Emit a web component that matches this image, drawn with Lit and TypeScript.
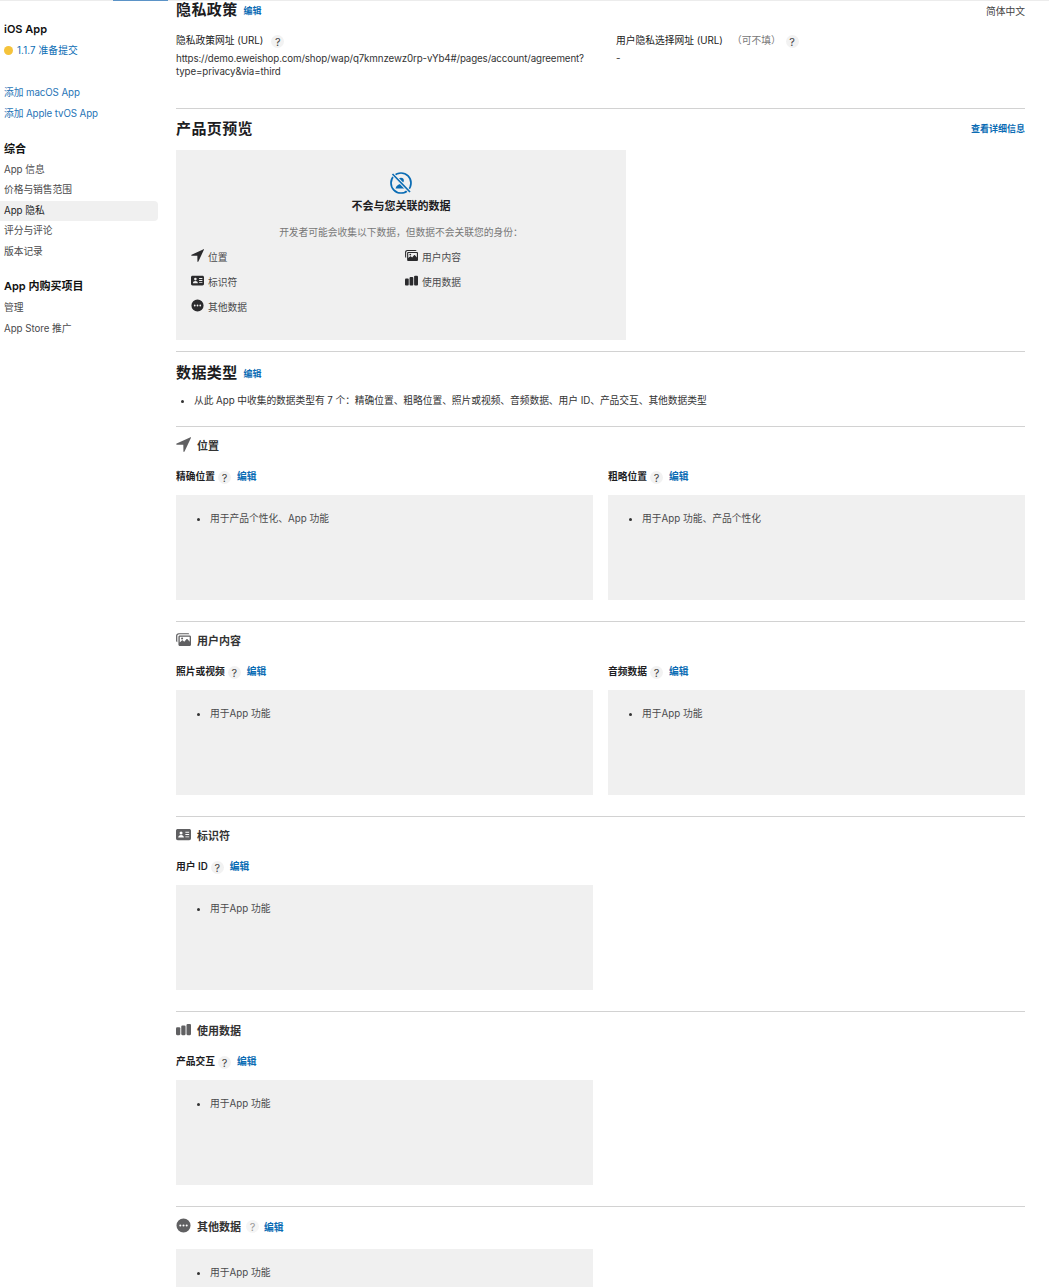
import { LitElement, html, css, svg } from "lit";
import { customElement } from "lit/decorators.js";

const icons: Record<string, any> = {
  loc: svg`<path d="M15.500.2.700 7c-.8.4-.6 1.200.3 1.200l6.800.1.1 6.800c0 .9.800 1.100 1.200.3L16 .7c.2-.4-.1-.7-.5-.5z"/>`,
  photo: svg`<path d="M3 1.200h9.600c.9 0 1.500.5 1.700 1.300H3.400c-1.200 0-2 .8-2 2v6.300c-.8-.2-1.300-.8-1.300-1.700V3.700C.1 2.200 1.300 1.200 3 1.200z"/><path fill-rule="evenodd" d="M4.200 3.600h10.200c1 0 1.600.6 1.600 1.600v8c0 1-.6 1.600-1.600 1.600H4.200c-1 0-1.600-.6-1.600-1.600v-8c0-1 .6-1.600 1.600-1.600zm.1 1.400c-.2 0-.3.100-.3.300v5.900l2.200-2.100c.4-.3.8-.3 1.100 0l1.500 1.300 2.300-2.700c.4-.4.900-.4 1.200 0l2.300 2.700V5.300c0-.2-.1-.3-.3-.3z"/><circle cx="6.500" cy="6.900" r="1.100"/>`,
  id: svg`<path fill-rule="evenodd" d="M2 2h12c1.300 0 2 .7 2 2v8c0 1.300-.7 2-2 2H2c-1.300 0-2-.7-2-2V4c0-1.300.7-2 2-2zm3.400 2.700a1.600 1.600 0 1 0 0 3.200 1.600 1.600 0 0 0 0-3.200zM2.400 11.300h6c0-1.600-1.300-2.700-3-2.700s-3 1.100-3 2.700zM10 5v1h4V5zm0 2.500v1h4v-1zm0 2.500v1h4v-1z"/>`,
  bars: svg`<rect x="0" y="5.500" width="4.600" height="8.500" rx="1.200"/><rect x="5.600" y="3.800" width="4.600" height="10.200" rx="1.200"/><rect x="11.200" y="2" width="4.800" height="12" rx="1.200"/>`,
  more: svg`<path fill-rule="evenodd" d="M8 .5a7.500 7.500 0 1 1 0 15 7.500 7.500 0 0 1 0-15zM4.600 6.900a1.100 1.100 0 1 0 0 2.200 1.100 1.100 0 0 0 0-2.200zm3.400 0a1.100 1.100 0 1 0 0 2.200 1.100 1.100 0 0 0 0-2.200zm3.400 0a1.100 1.100 0 1 0 0 2.200 1.100 1.100 0 0 0 0-2.200z"/>`,
};

const icon = (n: string) => html`<svg class="ico" viewBox="0 0 16 16" fill="currentColor">${icons[n]}</svg>`;

const help = (dim = false) => html`<span class="help ${dim ? "dim" : ""}">?</span>`;

type Card = { name: string; text: string };
type Sec = { ico: string; title: string; cards: Card[] };

const secs: Sec[] = [
  { ico: "loc", title: "位置", cards: [{ name: "精确位置", text: "用于产品个性化、App 功能" }, { name: "粗略位置", text: "用于App 功能、产品个性化" }] },
  { ico: "photo", title: "用户内容", cards: [{ name: "照片或视频", text: "用于App 功能" }, { name: "音频数据", text: "用于App 功能" }] },
  { ico: "id", title: "标识符", cards: [{ name: "用户 ID", text: "用于App 功能" }] },
  { ico: "bars", title: "使用数据", cards: [{ name: "产品交互", text: "用于App 功能" }] },
];

@customElement("app-root")
export class AppRoot extends LitElement {
  static styles = css`
    :host { display: block; height: 1287px; overflow: hidden; background: #fff; color: #1d1d1f;
      font-family: "Inter", "Noto Sans CJK SC", sans-serif; font-size: 9.750px; -webkit-font-smoothing: antialiased; }
    .topbar { height: 1px; background: #ececec; display: flex; }
    .topbar i { display: block; width: 55px; margin-left: 113px; background: #5b93c7; }
    .page { display: flex; align-items: flex-start; }
    aside { width: 176px; flex: none; padding-top: 20px; box-sizing: border-box; }
    aside a, aside div { display: block; }
    .side-h { font-size: 11px; font-weight: 600; line-height: 16px; padding-left: 4px; color: #111; }
    .h1 { margin-top: 16.500px; margin-bottom: 3px; }
    .h2 { margin-top: 16px; margin-bottom: 4px; }
    .ver { display: flex; align-items: center; gap: 4px; padding-left: 4px; margin-top: 5px; margin-bottom: 25px; height: 16px; color: #0a6cb4; letter-spacing: .1px; }
    .dot { width: 9px; height: 9px; border-radius: 50%; background: #f5c33b; flex: none; }
    .add { color: #1f74b6; padding-left: 4px; height: 20.500px; line-height: 20.500px; letter-spacing: -.1px; }
    .nav { width: 158px; height: 20.500px; line-height: 20.500px; padding-left: 4px; box-sizing: border-box; color: #4a4a4c; letter-spacing: -.05px; }
    .nav.on { background: #f0f0f0; border-radius: 0 4px 4px 0; color: #1d1d1f; }
    main { width: 849px; flex: none; margin-top: -1px; }
    .row { display: flex; align-items: center; }
    h2 { margin: 0; font-size: 15px; font-weight: 600; color: #1d1d1f; line-height: 20px; letter-spacing: .4px; }
    .edit { color: #0a6cb4; font-size: 9px; font-weight: 600; }
    .head { height: 20px; }
    .head .edit { margin-left: 6px; }
    .lang { margin-left: auto; color: #444; position: relative; top: 1px; }
    .fields { display: grid; grid-template-columns: 440px 1fr; margin-top: 11px; height: 77px; }
    .lbl { display: flex; align-items: center; height: 18px; color: #222; }
    .lbl .opt { color: #777; margin-left: 9px; }
    .help { width: 13px; height: 13px; border-radius: 50%; background: #f2f2f2; color: #444; font-size: 11px;
      line-height: 14px; text-align: center; margin-left: 8px; position: relative; top: 1px; flex: none; }
    .opt + .help { margin-left: 5px; }
    .help.dim { color: #999; margin-left: -1px; background: #f5f5f5; font-weight: 400; }
    .url { line-height: 13px; margin-top: 3px; color: #333; white-space: nowrap; letter-spacing: -.125px; }
    hr { border: 0; height: 1px; background: #d2d2d2; margin: 0; }
    .more { margin-left: auto; }
    .prev-h { height: 41px; padding-bottom: 2px; box-sizing: border-box; }
    .preview { width: 450px; height: 190px; background: #f0f0f0; box-sizing: border-box; padding-top: 21px; margin-bottom: 11px; }
    .preview .t { text-align: center; font-size: 11px; font-weight: 600; line-height: 14px; margin-top: 4px; color: #1d1d1f; }
    .preview .big { display: block; margin: 0 auto; width: 24px; height: 24px; }
    .preview .s { text-align: center; color: #777; margin-top: 13px; line-height: 14px; }
    .plist { display: grid; grid-template-columns: 214px 1fr; grid-auto-rows: 25px; padding-left: 15px; margin-top: 4px; color: #4a4a4c; }
    .pi { display: flex; align-items: center; gap: 4px; }
    .pi .ico { width: 13px; height: 13px; color: #2b2b2d; position: relative; top: -1px; }
    .types-h { height: 41px; }
    .types-h .edit { margin-left: 6px; position: relative; top: 1px; }
    .types { padding: 1px 0 0 18px; height: 33px; color: #333; line-height: 14px; box-sizing: border-box; letter-spacing: -.05px; }
    .bul { position: relative; }
    .bul::before { content: ""; position: absolute; left: -13px; top: 5px; width: 3px; height: 3px; border-radius: 50%; background: #333; }
    .sec { height: 194px; }
    .sec-h { height: 36px; padding-bottom: 1px; box-sizing: border-box; font-size: 11px; font-weight: 600; gap: 6px; color: #333; }
    .sec-h .ico { width: 15px; height: 15px; color: #606062; }
    .cards { display: grid; grid-template-columns: 417px 417px; column-gap: 15px; }
    .card-h { height: 32px; display: flex; align-items: center; font-size: 9.750px; font-weight: 600; color: #1d1d1f; padding-bottom: 6px; box-sizing: border-box; }
    .card-h .help { font-weight: 400; margin-left: 3px; }
    .card-h .edit { margin-left: 6px; font-size: 9.750px; }
    .box { height: 105px; background: #f0f0f0; box-sizing: border-box; padding: 17px 0 0 34px; line-height: 14px; color: #4a4a4c; }
    .last-h { height: 38px; }
    .last-h .edit { font-size: 9.750px; position: relative; top: 1px; margin-left: -1px; }
    .last .box { width: 417px; margin-top: 4px; }
  `;

  render() {
    return html`
      <div class="topbar"><i></i></div>
      <div class="page">
        <aside>
          <div class="side-h">iOS App</div>
          <div class="ver"><span class="dot"></span><span>1.1.7 准备提交</span></div>
          <a class="add">添加 macOS App</a>
          <a class="add">添加 Apple tvOS App</a>
          <div class="side-h h1">综合</div>
          <div class="nav">App 信息</div>
          <div class="nav">价格与销售范围</div>
          <div class="nav on">App 隐私</div>
          <div class="nav">评分与评论</div>
          <div class="nav">版本记录</div>
          <div class="side-h h2">App 内购买项目</div>
          <div class="nav">管理</div>
          <div class="nav">App Store 推广</div>
        </aside>
        <main>
          <div class="row head"><h2>隐私政策</h2><span class="edit">编辑</span><span class="lang">简体中文</span></div>
          <div class="fields">
            <div>
              <div class="lbl">隐私政策网址 (URL)${help()}</div>
              <div class="url">https://demo.eweishop.com/shop/wap/q7kmnzewz0rp-vYb4#/pages/account/agreement?<br />type=privacy&via=third</div>
            </div>
            <div>
              <div class="lbl">用户隐私选择网址 (URL)<span class="opt">（可不填）</span>${help()}</div>
              <div class="url">-</div>
            </div>
          </div>
          <hr />
          <div class="row prev-h"><h2>产品页预览</h2><span class="edit more">查看详细信息</span></div>
          <div class="preview">
            <svg class="big" viewBox="0 0 24 24" fill="none" stroke="#0a6cb4">
              <circle cx="12" cy="12" r="10" stroke-width="1.700" />
              <circle cx="12" cy="9.500" r="2.800" fill="#0a6cb4" stroke="none" />
              <path d="M6.500 17.500c.8-3 3-4.500 5.500-4.500s4.700 1.500 5.500 4.500z" fill="#0a6cb4" stroke="none" />
              <path d="M3.500 3 21 21" stroke="#f0f0f0" stroke-width="3.500" />
              <path d="M3.500 3 21 21" stroke-width="1.700" />
            </svg>
            <div class="t">不会与您关联的数据</div>
            <div class="s">开发者可能会收集以下数据，但数据不会关联您的身份：</div>
            <div class="plist">
              <div class="pi">${icon("loc")}<span>位置</span></div>
              <div class="pi">${icon("photo")}<span>用户内容</span></div>
              <div class="pi">${icon("id")}<span>标识符</span></div>
              <div class="pi">${icon("bars")}<span>使用数据</span></div>
              <div class="pi">${icon("more")}<span>其他数据</span></div>
            </div>
          </div>
          <hr />
          <div class="row types-h"><h2>数据类型</h2><span class="edit">编辑</span></div>
          <div class="types"><span class="bul">从此 App 中收集的数据类型有 7 个：精确位置、粗略位置、照片或视频、音频数据、用户 ID、产品交互、其他数据类型</span></div>
          ${secs.map((s) => html`
            <hr />
            <div class="sec">
              <div class="row sec-h">${icon(s.ico)}<span>${s.title}</span></div>
              <div class="cards">
                ${s.cards.map((c) => html`
                  <div>
                    <div class="card-h"><span>${c.name}</span>${help()}<span class="edit">编辑</span></div>
                    <div class="box"><span class="bul">${c.text}</span></div>
                  </div>`)}
              </div>
            </div>`)}
          <hr />
          <div class="last">
            <div class="row sec-h last-h">${icon("more")}<span>其他数据</span>${help(true)}<span class="edit">编辑</span></div>
            <div class="box"><span class="bul">用于App 功能</span></div>
          </div>
        </main>
      </div>
    `;
  }
}
